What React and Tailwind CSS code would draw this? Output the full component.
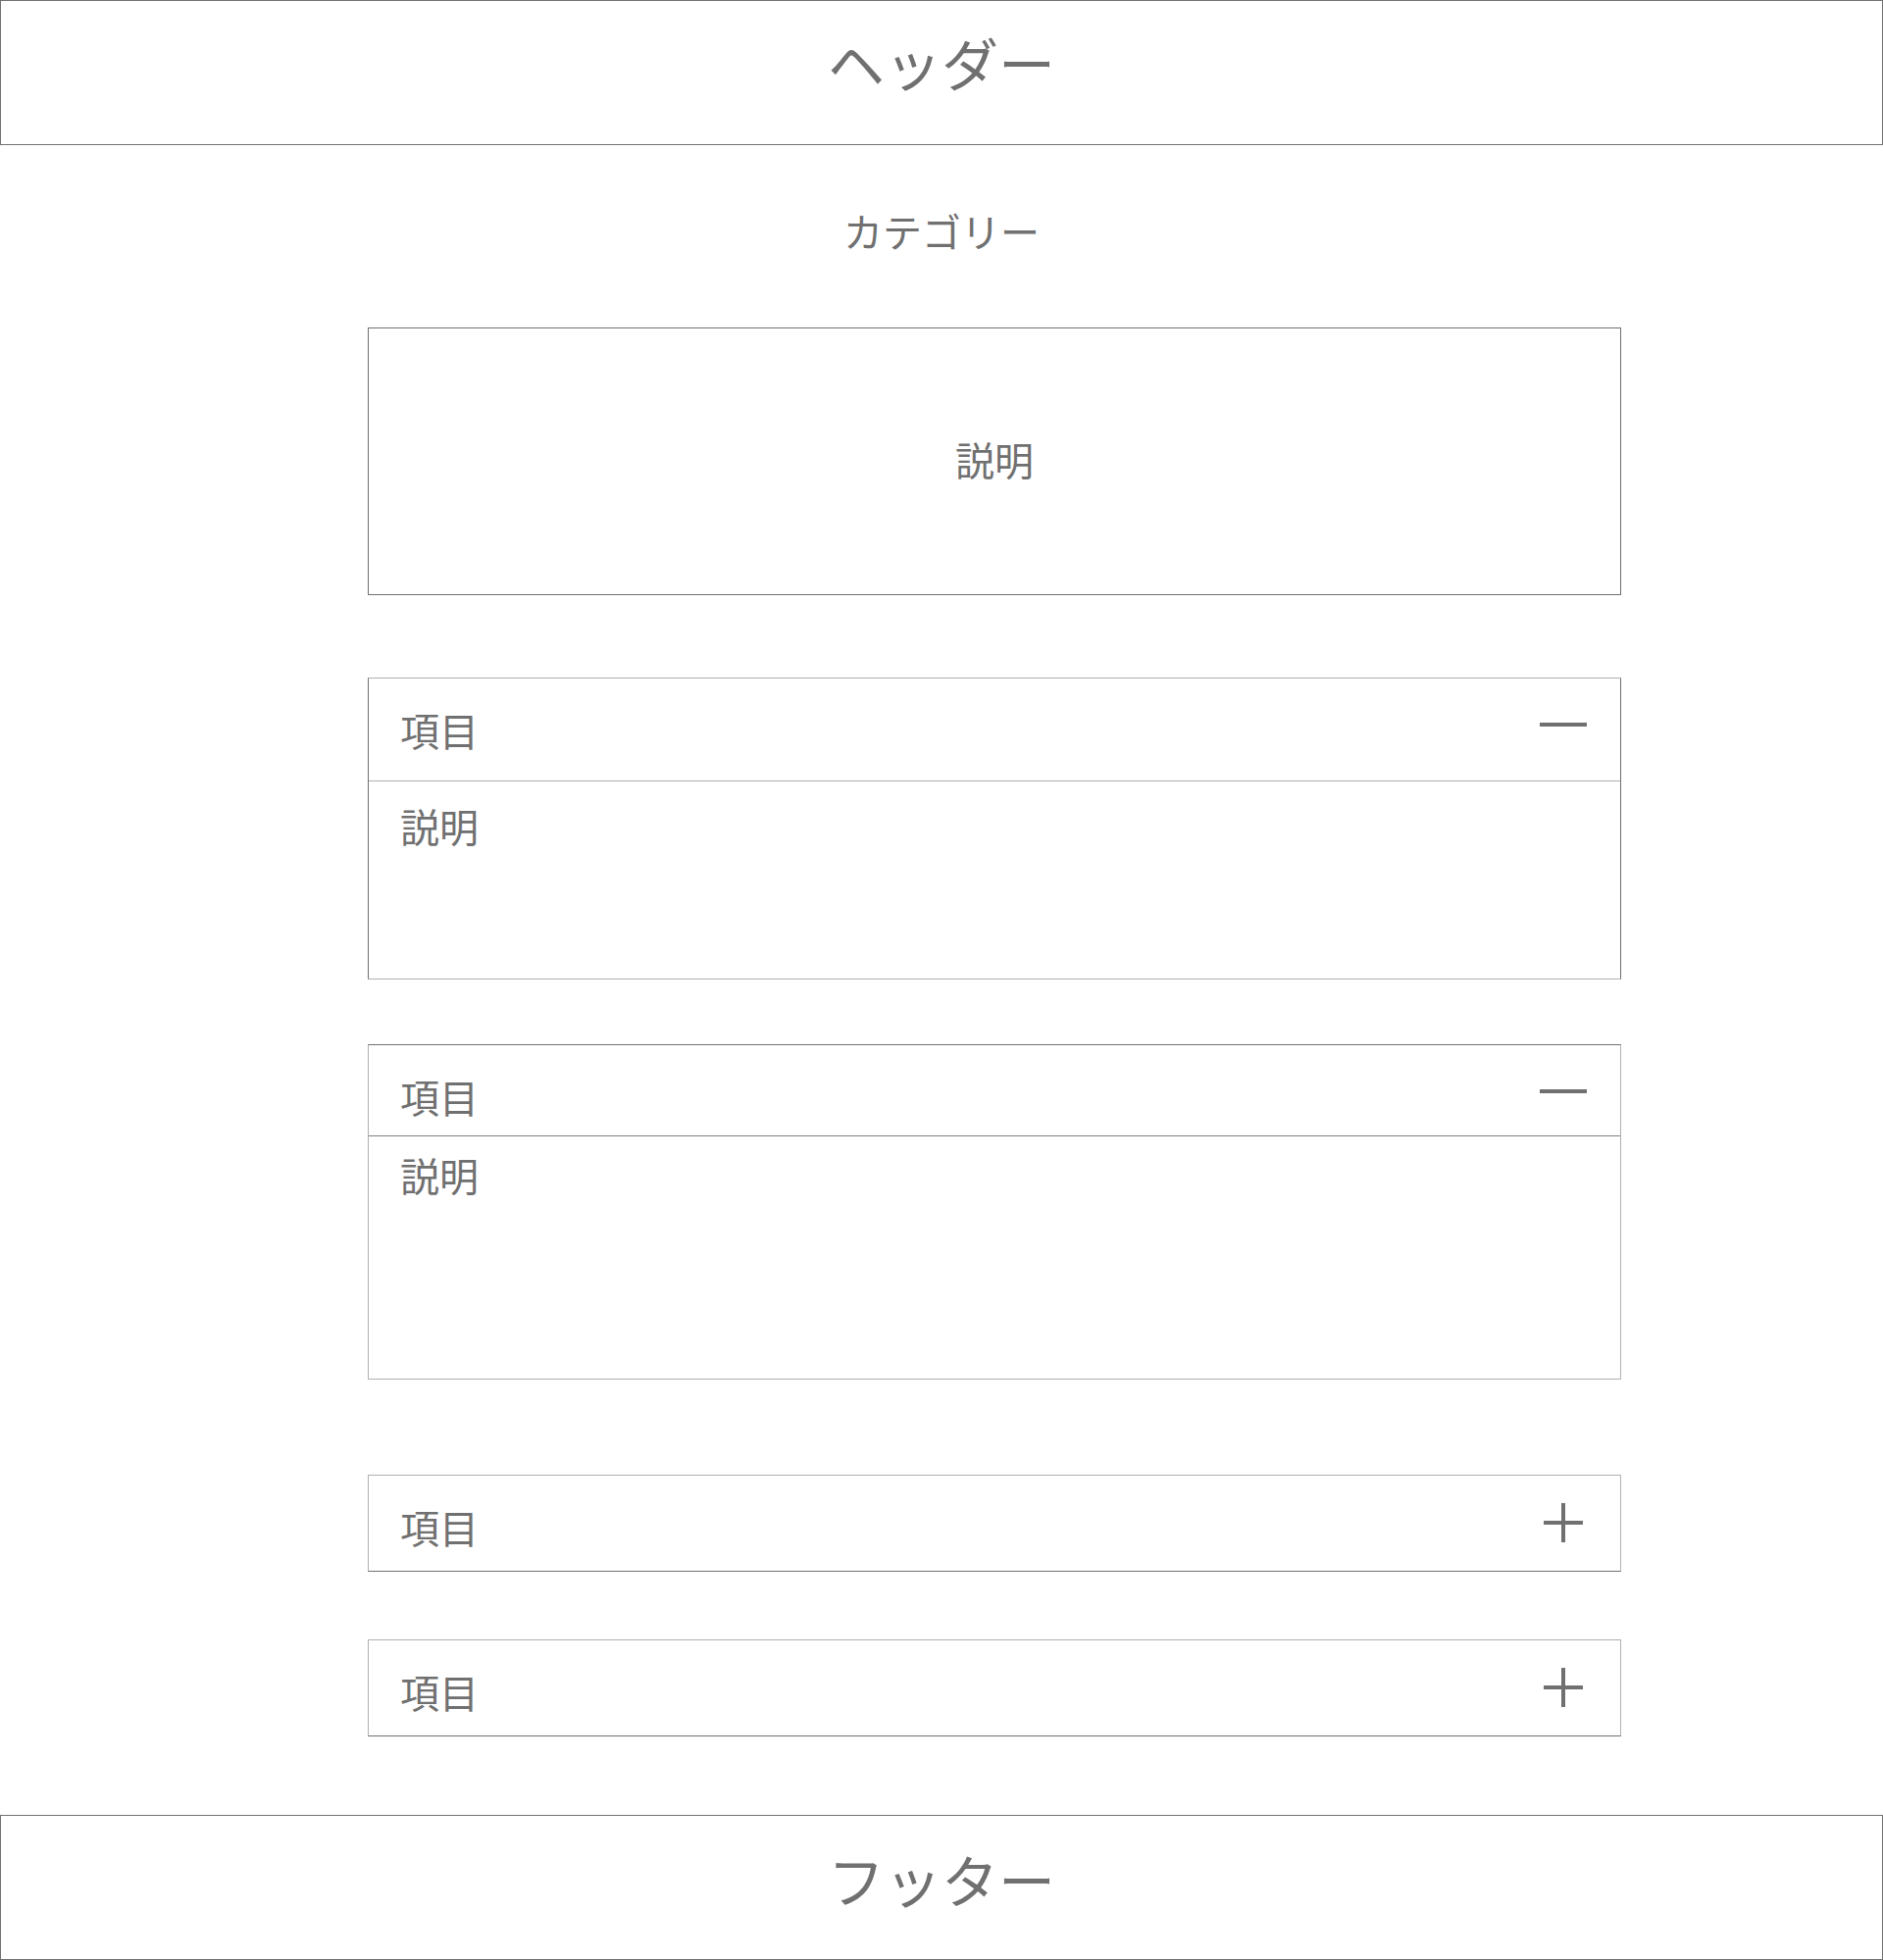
const font = { fontFamily: '"Noto Sans CJK JP", "Noto Sans", sans-serif' };

const MinusIcon = () => (
  <div className="w-12 h-12 flex items-center justify-center">
    <div className="w-12 h-1 bg-[#707070]" />
  </div>
);

const PlusIcon = () => (
  <div className="w-12 h-12 flex items-center justify-center">
    <svg width="40" height="40" viewBox="0 0 40 40">
      <path d="M20 0V40M0 20H40" stroke="#707070" strokeWidth="4" />
    </svg>
  </div>
);

const AccordionHead = ({ open, className }) => (
  <div className={`flex items-start justify-between pl-8 pr-[34px] ${className}`}>
    <span className="pt-[32px] text-[40px] leading-[40px]">項目</span>
    <div className={open ? 'mt-[23px]' : 'mt-[24px]'}>
      {open ? <MinusIcon /> : <PlusIcon />}
    </div>
  </div>
);

const App = () => {
  return (
    <div className="w-[1920px] h-[1999px] bg-white text-[#707070]" style={font}>
      <header className="h-[148px] border border-[#707070] pt-[33px] text-center text-[58px] leading-[58px]">
        ヘッダー
      </header>

      <main>
        <h2 className="mt-[67px] mb-[79px] text-center text-[40px] leading-[40px] font-normal">
          カテゴリー
        </h2>

        <div className="ml-[375px] w-[1278px] h-[273px] pb-[6px] border border-[#707070] flex items-center justify-center text-[40px] leading-[40px]">
          説明
        </div>

        {/* 開いた項目 */}
        <div className="mt-[84px] ml-[375px] w-[1278px] h-[308px] border border-[#b0b0b0] border-l-[#707070] border-r-[#707070]">
          <AccordionHead open className="h-[105px] border-b border-[#b0b0b0]" />
          <div className="pl-8 pt-[25px] text-[40px] leading-[40px]">説明</div>
        </div>

        <div className="mt-[66px] ml-[375px] w-[1278px] h-[342px] border border-[#b0b0b0] border-t-[#707070]">
          <AccordionHead open className="h-[93px] border-b border-[#808080]" />
          <div className="pl-8 pt-[19px] text-[40px] leading-[40px]">説明</div>
        </div>

        {/* 閉じた項目 */}
        <div className="mt-[97px] ml-[375px] w-[1278px] h-[99px] border border-[#b0b0b0] border-b-[#707070]">
          <AccordionHead className="h-[97px]" />
        </div>

        <div className="mt-[69px] ml-[375px] w-[1278px] h-[99px] border border-[#b0b0b0] border-b-[#707070]">
          <AccordionHead className="h-[97px]" />
        </div>
      </main>

      <footer className="mt-[80px] h-[148px] border border-[#707070] pt-[35px] text-center text-[58px] leading-[58px]">
        フッター
      </footer>
    </div>
  );
};

export default App;
